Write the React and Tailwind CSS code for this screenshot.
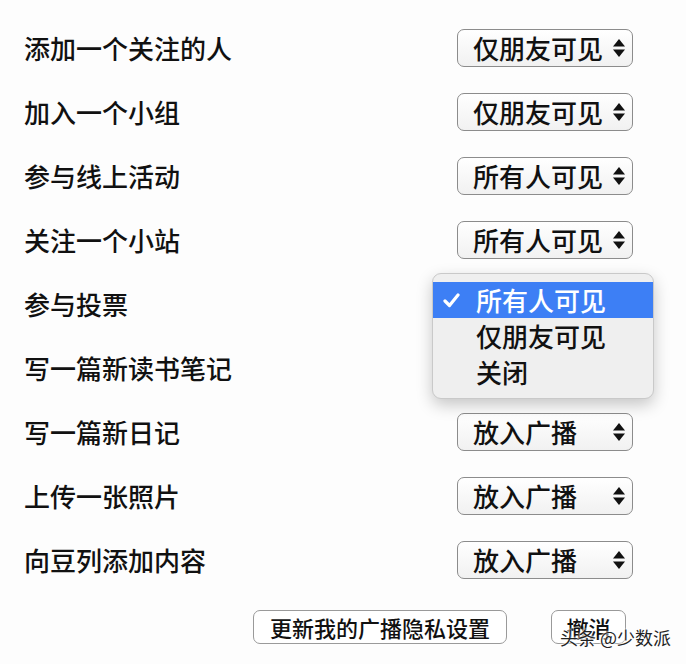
import React from "react";

const rows = [
  { label: "添加一个关注的人", value: "仅朋友可见" },
  { label: "加入一个小组", value: "仅朋友可见" },
  { label: "参与线上活动", value: "所有人可见" },
  { label: "关注一个小站", value: "所有人可见" },
  { label: "参与投票", value: "所有人可见", open: true },
  { label: "写一篇新读书笔记", value: "放入广播" },
  { label: "写一篇新日记", value: "放入广播" },
  { label: "上传一张照片", value: "放入广播" },
  { label: "向豆列添加内容", value: "放入广播" },
];

const options = ["所有人可见", "仅朋友可见", "关闭"];

const font = {
  fontFamily: '"Noto Sans CJK SC", "Noto Sans", sans-serif',
};

function Arrows() {
  return (
    <svg width="14" height="20" viewBox="0 0 14 20" className="shrink-0">
      <path d="M7 1 L13 8.5 L1 8.5 Z" fill="#111" />
      <path d="M1 11.5 L13 11.5 L7 19 Z" fill="#111" />
    </svg>
  );
}

function Check() {
  return (
    <svg width="17" height="15" viewBox="0 0 17 15" className="shrink-0">
      <path
        d="M2 8 L6.5 12.5 L15 2"
        fill="none"
        stroke="#fff"
        strokeWidth="3.2"
        strokeLinecap="round"
        strokeLinejoin="round"
      />
    </svg>
  );
}

function Menu({ selected }) {
  return (
    <div className="absolute left-[-25px] top-[-12px] z-10 w-[222px] rounded-[9px] border border-[#c9c9c9] bg-[#efefef] py-2 shadow-[0_6px_16px_rgba(0,0,0,0.22)]">
      {options.map((opt) => {
        const active = opt === selected;
        return (
          <div
            key={opt}
            className={`flex h-[36px] items-center gap-[16px] pl-[10px] text-[26px] font-medium leading-none ${
              active ? "bg-[#3d7ff5] text-white" : "text-[#111]"
            }`}
          >
            <span className="flex w-[17px] justify-center">{active && <Check />}</span>
            <span>{opt}</span>
          </div>
        );
      })}
    </div>
  );
}

function Select({ value, open }) {
  return (
    <div className="relative">
      <div className="flex h-[38px] w-[176px] items-center justify-between rounded-[7px] border border-[#8c8c8c] bg-gradient-to-b from-white to-[#f1f1f1] pl-[15px] pr-[6px] text-[26px] font-medium leading-none text-[#111]">
        <span>{value}</span>
        <Arrows />
      </div>
      {open && <Menu selected={value} />}
    </div>
  );
}

export default function App() {
  return (
    <div className="relative h-[664px] w-[686px] bg-[#fdfdfd] pt-4" style={font}>
      {rows.map((r) => (
        <div key={r.label} className="flex h-16 items-center justify-between pl-6 pr-[53px]">
          <span className="text-[26px] font-medium leading-none text-[#111]">{r.label}</span>
          <Select value={r.value} open={r.open} />
        </div>
      ))}

      <div className="mt-[18px] flex items-center gap-[44px] pl-[253px]">
        <button className="h-[34px] w-[254px] rounded-[7px] border border-[#9a9a9a] bg-white text-[22px] font-medium leading-none text-[#111]">
          更新我的广播隐私设置
        </button>
        <button className="h-[34px] w-[75px] rounded-[7px] border border-[#9a9a9a] bg-white text-[22px] font-medium leading-none text-[#111]">
          撤消
        </button>
      </div>

      <span
        className="absolute left-[560px] top-[628px] text-[18px] leading-none text-[#222]"
        style={{ textShadow: "0 0 2px #fff, 0 0 2px #fff, 0 0 3px #fff" }}
      >
        头条 @少数派
      </span>
    </div>
  );
}
